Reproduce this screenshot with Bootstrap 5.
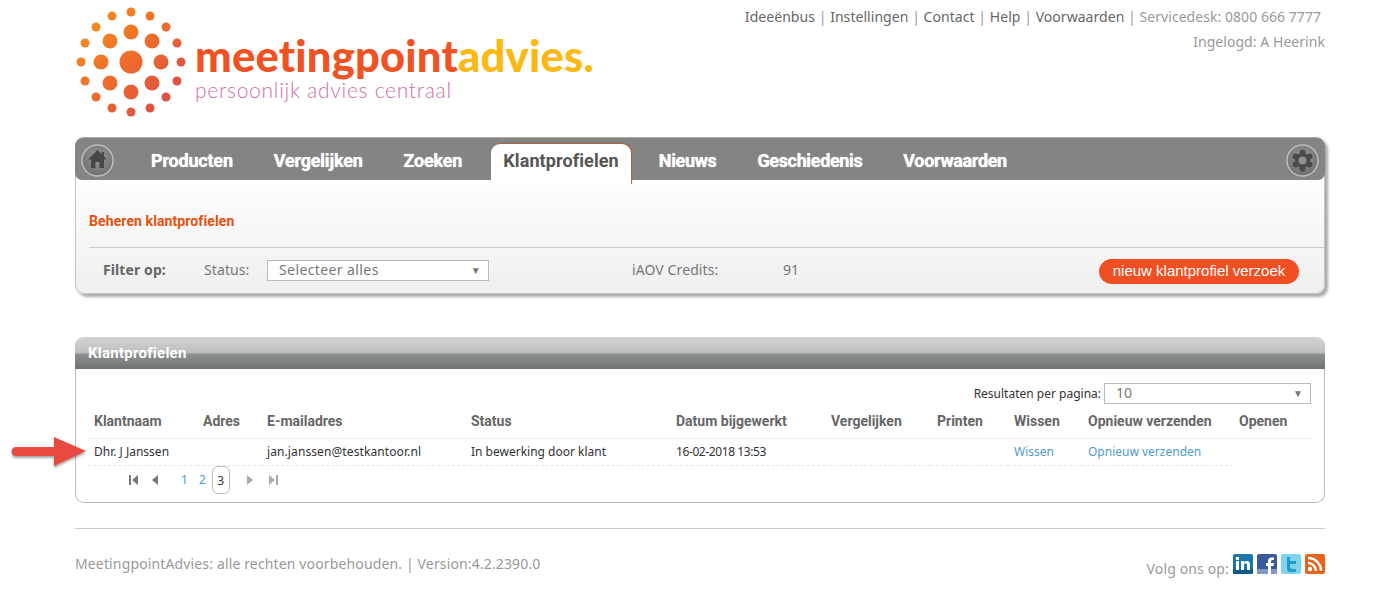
<!DOCTYPE html>
<html lang="nl">
<head>
<meta charset="UTF-8" />
<title>Klantprofielen | MeetingpointAdvies</title>
<link href="https://cdn.jsdelivr.net/npm/bootstrap@5.3.3/dist/css/bootstrap.min.css" rel="stylesheet" />
<style>
  body { font-family: "Noto Sans", sans-serif; font-size: 14px; color: #777; background: #fff; }
  a { text-decoration: none; }
  .page-wrap { width: 1250px; margin-left: 75px; }

  .top-head { height: 137px; }
  .logo-dots { width: 116px; height: 116px; margin: 4px 0 0 -2px; flex: none; }
  .logo-words { margin: 33px 0 0 6px; }
  .logo-main { font-family: Lato, sans-serif; font-weight: 900; font-size: 43.5px; line-height: 44px; color: #f15223; letter-spacing: .2px; }
  .logo-main span { color: #fdb913; }
  .logo-sub { font-family: Lato, sans-serif; font-weight: 300; font-size: 21px; line-height: 22px; margin-top: 2px; color: #cb71ad; letter-spacing: .72px; }
  .top-links { font-size: 14px; line-height: 25px; padding-top: 4px; text-align: right; color: #999; letter-spacing: .05px; }
  .top-links a { color: #666; }
  .top-links .first-line { padding-right: 4px; }

  .menu-panel { height: 157px; border: 1px solid #c4c4c4; border-top: 0; border-radius: 9px; background: linear-gradient(#fff 25%, #efefef); box-shadow: 3px 3px 3px #aaa; }
  .menu-bar { height: 43px; background: #848484; border-radius: 9px 9px 7px 7px; padding: 6px 6px 0 6px; border-top: 1px solid #aaa; margin: 0 -1px; }
  .round-icon { width: 33px; height: 33px; flex: none; }
  .menu-items { margin-left: 37px; }
  .menu-items .nav-link { font-family: Roboto, sans-serif; font-weight: 700; font-size: 18px; letter-spacing: -.2px; color: #fff; padding: 3px 0 0; height: 36px; margin-right: 41px; text-shadow: 0 0 1px #fff; }
  .menu-items .nav-link.active { background: #fff; color: #555; letter-spacing: .1px; border-radius: 9px 9px 0 0; height: 41px; padding: 3px 12px 0 12px; margin: 0 28px 0 -12px; box-shadow: 1px -1px 1px #a8603c; text-shadow: none; }
  .menu-items .nav-link.active ~ .nav-link { letter-spacing: -.35px; }
  .page-title { color: #e8500c; font-family: Roboto, sans-serif; font-weight: 700; font-size: 14px; letter-spacing: .1px; padding: 31px 0 0 13px; height: 67px; }
  .filter-row { margin-left: 13px; border-top: 1px solid #ccc; padding: 11px 25px 0 14px; height: 47px; letter-spacing: .1px; }
  .filter-row b { width: 101px; color: #666; }
  .status-label { width: 63px; }
  .pick-box { border: 1px solid #bbb; background: #fff; height: 21px; color: #777; padding: 0 7px 0 11px; line-height: 18px; letter-spacing: .4px; }
  .pick-box i { font-style: normal; font-size: 10px; color: #777; }
  .pick-status { width: 222px; margin-top: 1px; }
  .credits-label { width: 151px; margin-left: 143px; }
  .btn-request { background: #f04f23; color: #fff; font-family: "Liberation Sans", sans-serif; font-size: 15px; line-height: 17px; width: 200px; height: 25px; padding: 3px 0 0; border: 0; letter-spacing: 0; }
  .btn-request:hover { background: #d9431b; color: #fff; }

  .list-panel { margin-top: 43px; height: 166px; border: 1px solid #bbb; border-top: 0; border-radius: 9px; }
  .list-head { height: 32px; margin: 0 -1px; border-radius: 9px 9px 0 0; background: linear-gradient(#d2d4d4, #bec0c0 48%, #8b9090 54%, #6d7373); color: #fff; font-family: Roboto, sans-serif; font-weight: 700; font-size: 15px; letter-spacing: .25px; line-height: 32px; padding-left: 13px; }
  .per-page { padding: 14px 13px 0 0; color: #333; font-size: 12px; line-height: 21px; }
  .pick-perpage { width: 207px; margin-left: 3px; font-size: 14px; letter-spacing: 0; }
  .arrow-mark { position: absolute; left: -66px; top: 98px; width: 78px; height: 36px; }
  .grid-wrap { padding: 0 12px; position: relative; }
  .client-table { table-layout: fixed; width: 1224px; margin: 0; }
  .client-table th, .client-table td { padding: 0 0 0 6px; background: none; white-space: nowrap; vertical-align: middle; }
  .client-table th { font-family: Roboto, sans-serif; font-weight: 700; color: #666; font-size: 14px; height: 34px; padding-top: 2px; border-bottom: 1px solid #eee; }
  .client-table td { color: #333; font-size: 12px; height: 27px; border-bottom: 1px dashed #e6e6e6; }
  .client-table td a { color: #4f9bd0; }
  .client-table td.no-line { border: 0; }
  .client-table .cell-email { letter-spacing: .1px; }
  .client-table .cell-date { letter-spacing: -.4px; }
  .pager-row { padding-left: 41px; height: 28px; }
  .pager-row a { color: #4f9bd0; font-size: 12px; }
  .pager-row svg { width: 10px; height: 12px; fill: #777; flex: none; }
  .pager-row .is-off { fill: #aaa; }
  .pager-row .gap-prev { margin-left: 11px; }
  .pager-row .gap-one { margin-left: 21px; }
  .pager-row .gap-two { margin-left: 11px; }
  .pager-row .gap-current { margin-left: 6px; }
  .pager-row .gap-next { margin-left: 15px; }
  .pager-row .gap-last { margin-left: 13px; }
  .pager-current { border: 1px solid #bbb; border-radius: 6px; width: 18px; height: 28px; text-align: center; line-height: 28px; color: #333; font-size: 12px; }

  .foot-row { margin-top: 25px; border-top: 1px solid #ccc; color: #999; height: 60px; letter-spacing: .14px; }
  .foot-left { padding-top: 24px; }
  .foot-right { padding-top: 25px; }
  .foot-right span { padding-top: 4px; margin-right: 4px; }
  .social-icon { width: 20px; height: 20px; margin-left: 4px; display: block; }
  .social-icon:first-of-type { margin-left: 0; }
</style>
</head>
<body>
<div class="page-wrap">

  <header class="top-head d-flex justify-content-between">
    <div class="d-flex">
      <svg class="logo-dots" viewBox="-58 -58 116 116">
        <defs>
          <linearGradient id="dotFill" gradientUnits="userSpaceOnUse" x1="-50" y1="-50" x2="50" y2="50">
            <stop offset="0" stop-color="#f7931e" />
            <stop offset=".5" stop-color="#ee6a2c" />
            <stop offset="1" stop-color="#d6474f" />
          </linearGradient>
        </defs>
        <g fill="url(#dotFill)">
          <circle r="11.5" />
          <circle cx="0" cy="-30" r="7.5" /><circle cx="21" cy="-21" r="7.5" /><circle cx="30" cy="0" r="7.5" /><circle cx="21" cy="21" r="7.5" />
          <circle cx="0" cy="30" r="7.5" /><circle cx="-21" cy="21" r="7.5" /><circle cx="-30" cy="0" r="7.5" /><circle cx="-21" cy="-21" r="7.5" />
          <circle cx="0" cy="-50" r="4.5" /><circle cx="19" cy="-46" r="4.5" /><circle cx="35" cy="-35" r="4.5" /><circle cx="46" cy="-19" r="4.5" />
          <circle cx="50" cy="0" r="4.5" /><circle cx="46" cy="19" r="4.5" /><circle cx="35" cy="35" r="4.5" /><circle cx="19" cy="46" r="4.5" />
          <circle cx="0" cy="50" r="4.5" /><circle cx="-19" cy="46" r="4.5" /><circle cx="-35" cy="35" r="4.5" /><circle cx="-46" cy="19" r="4.5" />
          <circle cx="-50" cy="0" r="4.5" /><circle cx="-46" cy="-19" r="4.5" /><circle cx="-35" cy="-35" r="4.5" /><circle cx="-19" cy="-46" r="4.5" />
        </g>
      </svg>
      <div class="logo-words">
        <div class="logo-main">meetingpoint<span>advies.</span></div>
        <div class="logo-sub">persoonlijk advies centraal</div>
      </div>
    </div>
    <div class="top-links">
      <div class="first-line"><a href="#">Ideeënbus</a> | <a href="#">Instellingen</a> | <a href="#">Contact</a> | <a href="#">Help</a> | <a href="#">Voorwaarden</a> | <span>Servicedesk: 0800 666 7777</span></div>
      <div>Ingelogd: A Heerink</div>
    </div>
  </header>

  <section class="menu-panel">
    <nav class="menu-bar d-flex">
      <svg class="round-icon" viewBox="0 0 33 33">
        <defs>
          <radialGradient id="knobFill" cx=".5" cy=".4" r=".6">
            <stop offset="0" stop-color="#9a9a9a" />
            <stop offset="1" stop-color="#6e6e6e" />
          </radialGradient>
        </defs>
        <circle cx="16.500" cy="16.500" r="15.500" fill="url(#knobFill)" stroke="#bdbdbd" stroke-width="1.500" />
        <path d="M16.500 6 7 15.500h3V24h4.500v-6h4v6H23v-8.500h3L23 12.500V8h-2.500v2z" fill="#484848" />
      </svg>
      <div class="nav menu-items flex-grow-1">
        <a class="nav-link" href="#">Producten</a>
        <a class="nav-link" href="#">Vergelijken</a>
        <a class="nav-link" href="#">Zoeken</a>
        <a class="nav-link active" href="#">Klantprofielen</a>
        <a class="nav-link" href="#">Nieuws</a>
        <a class="nav-link" href="#">Geschiedenis</a>
        <a class="nav-link" href="#">Voorwaarden</a>
      </div>
      <svg class="round-icon" viewBox="0 0 33 33">
        <circle cx="16.500" cy="16.500" r="15.500" fill="url(#knobFill)" stroke="#bdbdbd" stroke-width="1.500" />
        <g fill="#4a4a4a">
          <circle cx="16.500" cy="16.500" r="7.500" />
          <circle cx="16.500" cy="8.500" r="3" /><circle cx="23.400" cy="12.500" r="3" /><circle cx="23.400" cy="20.500" r="3" />
          <circle cx="16.500" cy="24.500" r="3" /><circle cx="9.600" cy="20.500" r="3" /><circle cx="9.600" cy="12.500" r="3" />
        </g>
        <circle cx="16.500" cy="16.500" r="4" fill="#8f8f8f" />
      </svg>
    </nav>
    <div class="page-title">Beheren klantprofielen</div>
    <div class="filter-row d-flex">
      <b>Filter op:</b>
      <span class="status-label">Status:</span>
      <div class="pick-box pick-status d-flex justify-content-between"><span>Selecteer alles</span><i>▼</i></div>
      <span class="credits-label">iAOV Credits:</span>
      <span>91</span>
      <a class="btn btn-request rounded-pill ms-auto" href="#">nieuw klantprofiel verzoek</a>
    </div>
  </section>

  <section class="list-panel position-relative">
    <div class="list-head">Klantprofielen</div>
    <div class="per-page d-flex justify-content-end">
      <span>Resultaten per pagina:</span>
      <div class="pick-box pick-perpage d-flex justify-content-between"><span>10</span><i>▼</i></div>
    </div>
    <svg class="arrow-mark" viewBox="0 0 78 36">
      <defs><filter id="arrowShade"><feDropShadow dx="0" dy="2" stdDeviation="1.200" flood-color="#000" flood-opacity=".35" /></filter></defs>
      <path d="M6 12H44V2L76 16 44 31V21H6a4.500 4.500 0 0 1 0-9z" fill="#e8483f" filter="url(#arrowShade)" />
    </svg>
    <div class="grid-wrap">
      <table class="table client-table">
        <colgroup>
          <col width="109" /><col width="64" /><col width="204" /><col width="205" /><col width="155" />
          <col width="106" /><col width="77" /><col width="74" /><col width="151" /><col width="79" />
        </colgroup>
        <thead>
          <tr>
            <th>Klantnaam</th><th>Adres</th><th>E-mailadres</th><th>Status</th><th>Datum bijgewerkt</th>
            <th>Vergelijken</th><th>Printen</th><th>Wissen</th><th>Opnieuw verzenden</th><th>Openen</th>
          </tr>
        </thead>
        <tbody>
          <tr>
            <td>Dhr. J Janssen</td><td></td><td class="cell-email">jan.janssen@testkantoor.nl</td><td>In bewerking door klant</td><td class="cell-date">16-02-2018 13:53</td>
            <td></td><td></td><td><a href="#">Wissen</a></td><td><a href="#">Opnieuw verzenden</a></td><td class="no-line"></td>
          </tr>
        </tbody>
      </table>
      <div class="pager-row d-flex align-items-center">
        <svg viewBox="0 0 10 12"><path d="M0 1h2v10H0zM9 1v10L3 6z" /></svg>
        <svg viewBox="0 0 10 12" class="gap-prev"><path d="M8 1v10L2 6z" /></svg>
        <a href="#" class="gap-one">1</a>
        <a href="#" class="gap-two">2</a>
        <div class="pager-current gap-current">3</div>
        <svg viewBox="0 0 10 12" class="is-off gap-next"><path d="M2 1v10l6-5z" /></svg>
        <svg viewBox="0 0 10 12" class="is-off gap-last"><path d="M1 1v10l6-5zM8 1h2v10H8z" /></svg>
      </div>
    </div>
  </section>

  <footer class="foot-row d-flex justify-content-between">
    <div class="foot-left">MeetingpointAdvies: alle rechten voorbehouden. | Version:4.2.2390.0</div>
    <div class="foot-right d-flex align-items-start">
      <span>Volg ons op:</span>
      <svg class="social-icon" viewBox="0 0 20 20"><rect width="20" height="20" rx="2" fill="#1a76ab" /><rect y="15" width="20" height="5" fill="#10598a" /><path d="M3 7h3v9H3zM3 3h3v3H3zM8 7h3v1.500c1-2 6-2.500 6 2V16h-3v-5c0-2-3-2-3 0v5H8z" fill="#fff" /></svg>
      <svg class="social-icon" viewBox="0 0 20 20"><rect width="20" height="20" rx="2" fill="#3b5a9a" /><rect y="15" width="20" height="5" fill="#8296c4" /><path d="M11 20v-8H9V9h2V7c0-3 2-4 6-3.500V6c-2 0-3 0-3 1.500V9h3l-.5 3H14v8z" fill="#fff" /></svg>
      <svg class="social-icon" viewBox="0 0 20 20"><rect width="20" height="20" rx="2" fill="#7fd3ea" /><path d="M6 3h3v4h6v3H9v3c0 1.500 1 2 6 2v3H9c-2 0-3-1.500-3-4z" fill="#1f9ccb" /></svg>
      <svg class="social-icon" viewBox="0 0 20 20"><rect width="20" height="20" rx="2" fill="#e8641b" /><circle cx="5" cy="15" r="2.200" fill="#fff" /><path d="M3 9a8 8 0 0 1 8 8M3 4a13 13 0 0 1 13 13" fill="none" stroke="#fff" stroke-width="2.500" /></svg>
    </div>
  </footer>

</div>
<script src="https://cdn.jsdelivr.net/npm/bootstrap@5.3.3/dist/js/bootstrap.bundle.min.js"></script>
</body>
</html>
